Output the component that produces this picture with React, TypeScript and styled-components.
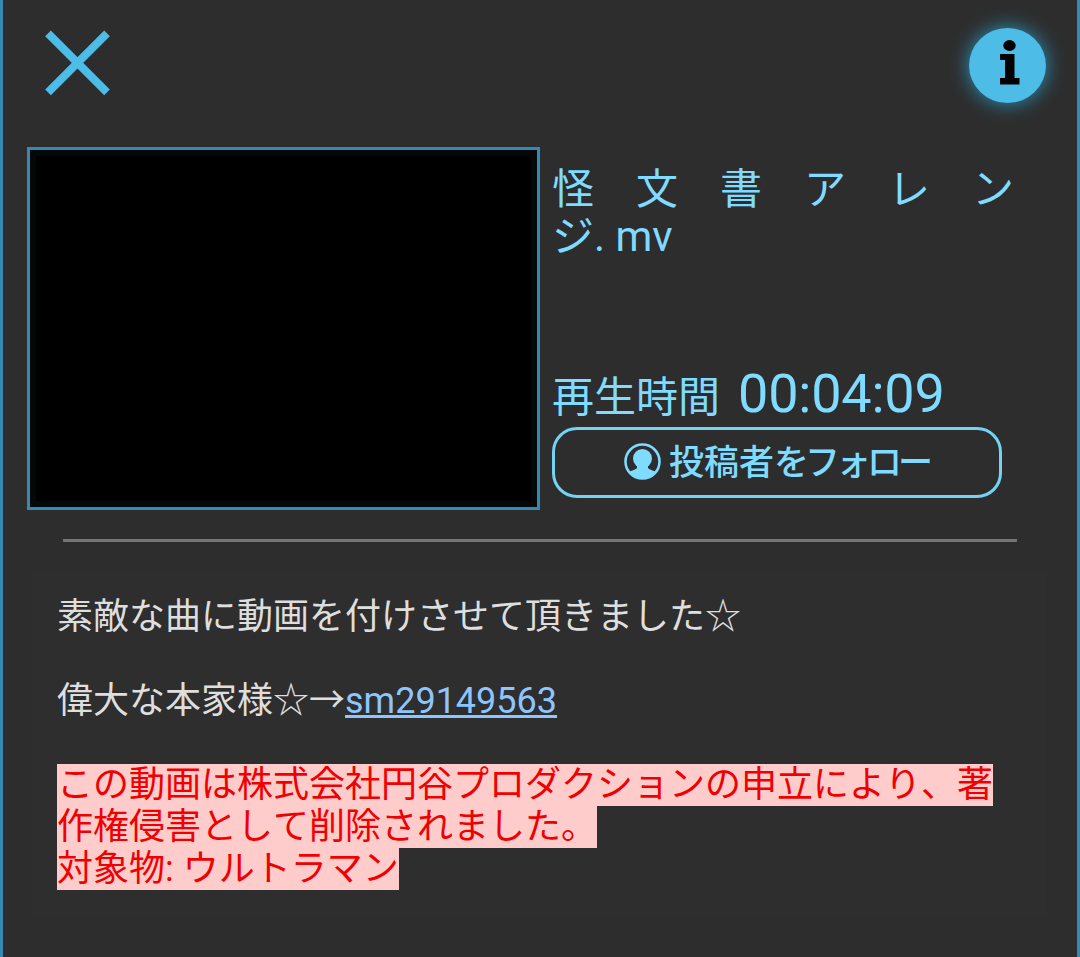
import styled, { createGlobalStyle } from "styled-components";

const GlobalStyle = createGlobalStyle`
  * {
    box-sizing: border-box;
  }
  body {
    margin: 0;
    background-color: #2d2d2d;
    font-family: Roboto, "Noto Sans CJK JP", sans-serif;
    font-kerning: none;
  }
`;

const Page = styled.div`
  width: 100%;
  height: 957px;
  border-left: 3px solid #3689b2;
  border-right: 3px solid #3689b2;
  overflow: hidden;
`;

const Header = styled.header`
  height: 147px;
  display: flex;
  justify-content: space-between;
  padding: 24px 20px 0 36px;
`;

const IconButton = styled.button<{ $width: number }>`
  width: ${(props) => props.$width}px;
  height: 78px;
  padding: 0;
  border: none;
  background: transparent;
  svg {
    display: block;
    overflow: visible;
  }
`;

const InfoIcon = styled.svg`
  filter: drop-shadow(0 0 10px rgba(42, 150, 190, 1));
`;

const Overview = styled.section`
  display: flex;
  gap: 12px;
  padding-left: 24px;
`;

const Thumbnail = styled.div`
  width: 513px;
  height: 363px;
  padding: 6px;
  border: 3px solid #3689b2;
  background-color: #050808;
`;

const Frame = styled.div`
  height: 100%;
  background-color: black;
`;

const Details = styled.div`
  width: 462px;
  height: 351px;
  display: flex;
  flex-direction: column;
  color: #7fdbff;
`;

const Title = styled.h1`
  margin: 19px 0 0;
  font-size: 42px;
  font-weight: 400;
  line-height: 47px;
  white-space: nowrap;
`;

const Duration = styled.div`
  margin-top: auto;
  display: flex;
  align-items: baseline;
  gap: 18px;
  height: 65px;
  font-size: 42px;
  line-height: 63px;
`;

const Time = styled.span`
  font-size: 54px;
  letter-spacing: -0.2px;
`;

const FollowButton = styled.button`
  flex: none;
  width: 450px;
  height: 71px;
  display: flex;
  align-items: center;
  padding: 0 0 2px 69px;
  gap: 8px;
  border: 3px solid #72d3f3;
  border-radius: 25px;
  background: transparent;
  color: #7fdbff;
  font-family: "Noto Sans CJK JP", sans-serif;
  font-size: 35px;
  font-weight: 500;
  line-height: 1;
  white-space: nowrap;
`;

const FollowLabel = styled.span`
  padding-bottom: 5px;
`;

const Kana = styled.span`
  letter-spacing: -4px;
`;

const Divider = styled.hr`
  width: 954px;
  height: 3px;
  margin: 29px 0 30px 60px;
  border: none;
  background-color: #757575;
`;

const Description = styled.div`
  width: 1014px;
  height: 344px;
  margin-left: 29px;
  padding: 24px 25px;
  background-color: #2e2e2e;
  color: #dedede;
  font-size: 36px;
  line-height: 42px;
`;

const Line = styled.p`
  margin: 0 0 42px;
`;

const VideoLink = styled.a`
  color: #8ec5ff;
  text-decoration: underline;
  text-decoration-thickness: 3px;
`;

const Notice = styled.span`
  background-color: #ffcccc;
  color: #f00000;
`;

function App() {
  return (
    <>
      <GlobalStyle />
      <Page>
        <Header>
          <IconButton $width={78} aria-label="閉じる">
            <svg width="78" height="78" viewBox="0 0 78 78">
              <path
                d="M9 9.3L68 68.3M68 9.3L9 68.3"
                stroke="#4dbce6"
                strokeWidth="8"
              />
            </svg>
          </IconButton>
          <IconButton $width={100} aria-label="動画情報">
            <InfoIcon width="100" height="78" viewBox="0 0 100 78">
              <ellipse cx="50.5" cy="41.5" rx="38.5" ry="37.5" fill="#4dbce6" />
              <ellipse cx="52.500" cy="21.500" rx="6.200" ry="5.400" />
              <path d="M43 30h14.5v24h5v6.5H43V54h5V36h-5z" />
            </InfoIcon>
          </IconButton>
        </Header>
        <Overview>
          <Thumbnail>
            <Frame />
          </Thumbnail>
          <Details>
            <Title>
              怪　文　書　ア　レ　ン
              <br />
              ジ. mv
            </Title>
            <Duration>
              再生時間<Time>00:04:09</Time>
            </Duration>
            <FollowButton>
              <svg width="37" height="37" viewBox="0 0 37 37">
                <circle
                  cx="18.5"
                  cy="18.5"
                  r="17"
                  fill="none"
                  stroke="currentColor"
                  strokeWidth="2.6"
                />
                <circle cx="18.5" cy="15.5" r="9.5" fill="currentColor" />
                <path
                  d="M13 21h11v4c1 1.500 5 2.500 8.500 4A17.500 17.500 0 0 1 4.500 29c3.500-1.500 7.500-2.500 8.500-4z"
                  fill="currentColor"
                />
              </svg>
              <FollowLabel>
                投稿者<Kana>をフォロー</Kana>
              </FollowLabel>
            </FollowButton>
          </Details>
        </Overview>
        <Divider />
        <Description>
          <Line>素敵な曲に動画を付けさせて頂きました☆</Line>
          <Line>
            偉大な本家様☆→<VideoLink href="#">sm29149563</VideoLink>
          </Line>
          <Notice>
            この動画は株式会社円谷プロダクションの申立により、著作権侵害として削除されました。
            <br />
            対象物: ウルトラマン
          </Notice>
        </Description>
      </Page>
    </>
  );
}
export default App;
